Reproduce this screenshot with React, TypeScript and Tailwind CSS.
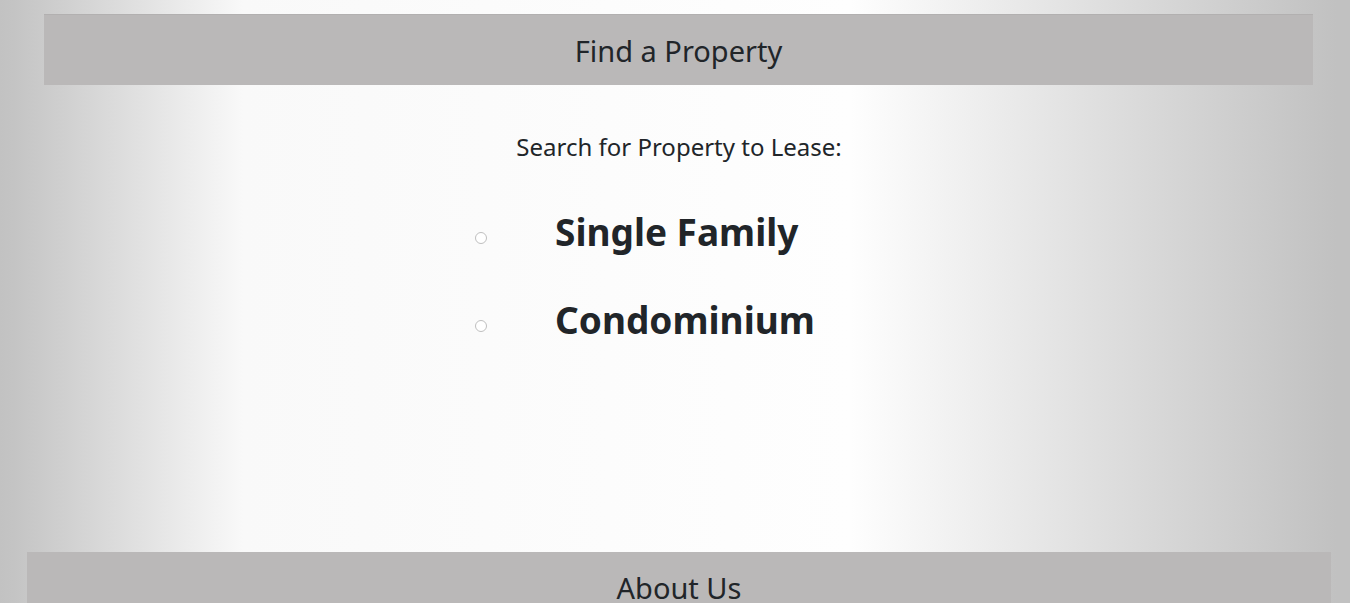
import React from 'react';

const options = ['Single Family', 'Condominium'];

const App: React.FC = () => {
  return (
    <div className="min-h-screen bg-[linear-gradient(to_right,#c2c2c2_0%,#c4c4c4_1%,#f9f9f9_18%,#fcfcfc_45%,#fefefe_63%,#c1c1c1_99%)] font-['Noto_Sans',sans-serif] text-[#212529] overflow-hidden">
      <div className="pt-[14px] pl-[44px] pr-[37px]">
        <div className="h-[71px] flex items-center justify-center bg-[#bab8b8] border-t border-[#b2b0b0]">
          <h2 className="text-[29px] leading-none">Find a Property</h2>
        </div>
      </div>

      <div className="pl-[8px] mt-[46px] text-center text-[24px] leading-[32px]">Search for Property to Lease:</div>

      <div className="mt-[44px] w-[400px] mx-auto flex flex-col gap-[40px]">
        {options.map((opt) => (
          <label key={opt} className="flex items-center h-[48px]">
            <input
              type="radio"
              name="propertyType"
              className="appearance-none w-[12px] h-[12px] rounded-full border border-[#bfbfbf] bg-white mt-[13px] shrink-0"
            />
            <span className="ml-[68px] text-[37px] font-bold leading-none">{opt}</span>
          </label>
        ))}
      </div>

      <div className="mt-[209px] pl-[27px] pr-[19px]">
        <div className="h-[71px] flex items-center justify-center bg-[#bab8b8]">
          <h2 className="text-[29px] leading-none">About Us</h2>
        </div>
      </div>
    </div>
  );
};

export default App;
